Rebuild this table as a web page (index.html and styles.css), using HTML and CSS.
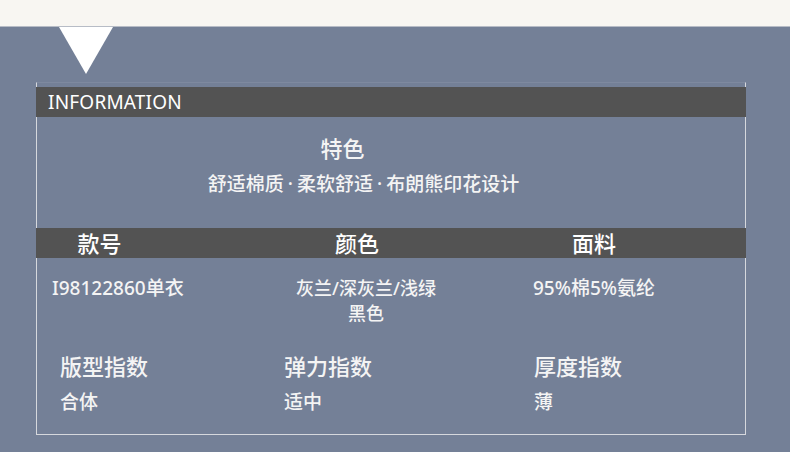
FILE: index.html
```html
<!DOCTYPE html>
<html lang="zh-CN">
<head>
<meta charset="utf-8">
<title>INFORMATION</title>
<link rel="stylesheet" href="styles.css">
</head>
<body>
<div class="top-strip"></div>
<div class="pointer"></div>
<section class="info-box">
  <div class="bar bar-title">INFORMATION</div>
  <div class="feature">
    <div class="feature-title">特色</div>
    <div class="feature-desc">舒适棉质<span class="dot">·</span>柔软舒适<span class="dot">·</span>布朗熊印花设计</div>
  </div>
  <div class="bar bar-heads">
    <div class="head head-1">款号</div>
    <div class="head head-2">颜色</div>
    <div class="head head-3">面料</div>
  </div>
  <div class="data-row">
    <div class="cell cell-1">I98122860单衣</div>
    <div class="cell cell-2">灰兰/深灰兰/浅绿<br>黑色</div>
    <div class="cell cell-3">95%棉5%氨纶</div>
  </div>
  <div class="index-row">
    <div class="index">
      <div class="index-title">版型指数</div>
      <div class="index-value">合体</div>
    </div>
    <div class="index">
      <div class="index-title">弹力指数</div>
      <div class="index-value">适中</div>
    </div>
    <div class="index">
      <div class="index-title">厚度指数</div>
      <div class="index-value">薄</div>
    </div>
  </div>
</section>
</body>
</html>
```
FILE: styles.css
```css
html, body {
  margin: 0;
  padding: 0;
  background: #748097;
  height: 100%;
}
body {
  font-family: "Noto Sans", "Noto Sans CJK SC", sans-serif;
  font-weight: 500;
  color: #f4f4f4;
  overflow: hidden;
}
.top-strip {
  height: 26px;
  background: #f8f6f2;
  border-bottom: 1px solid #b7bcc6;
}
.pointer {
  width: 0;
  height: 0;
  margin-left: 59px;
  border-top: 47px solid #ffffff;
  border-left: 27.5px solid transparent;
  border-right: 27.5px solid transparent;
}
.info-box {
  box-sizing: border-box;
  width: 710px;
  margin: 8px 0 0 36px;
  border: 1px solid #d6d8dd;
  border-top-color: #7e899f;
  padding: 4px 0 22px;
}
.bar {
  background: #535353;
  height: 30px;
  margin: 0 -1px;
  color: #ffffff;
}
.bar-title {
  font-family: "Noto Sans", sans-serif;
  font-weight: 400;
  font-size: 19px;
  line-height: 30px;
  padding-left: 12px;
  letter-spacing: 0.2px;
}
.feature {
  height: 111px;
  box-sizing: border-box;
  padding-top: 20px;
}
.feature-title {
  font-size: 22px;
  line-height: 22px;
  text-align: center;
  padding-right: 97px;
}
.feature-desc {
  margin-top: 16px;
  font-size: 19px;
  line-height: 19px;
  text-align: center;
  padding-right: 55px;
}
.dot {
  margin: 0 4px;
}
.bar-heads {
  display: flex;
  font-size: 22px;
  line-height: 30px;
}
.head {
  text-align: center;
}
.head-1 { width: 127px; }
.head-2 { width: 388px; }
.head-3 { width: 86px; }
.data-row {
  display: grid;
  grid-template-columns: 193px 272px 1fr;
  padding-top: 18px;
  font-size: 19px;
  line-height: 25px;
}
.cell-1 { padding-left: 15px; }
.cell-2 { text-align: center; font-size: 18px; }
.cell-3 { text-align: center; width: 184px; }
.index-row {
  display: grid;
  grid-template-columns: 224px 250px 1fr;
  padding-left: 23px;
  margin-top: 29px;
}
.index-title {
  font-size: 22px;
  line-height: 22px;
}
.index-value {
  margin-top: 16px;
  font-size: 19px;
  line-height: 19px;
}
```
